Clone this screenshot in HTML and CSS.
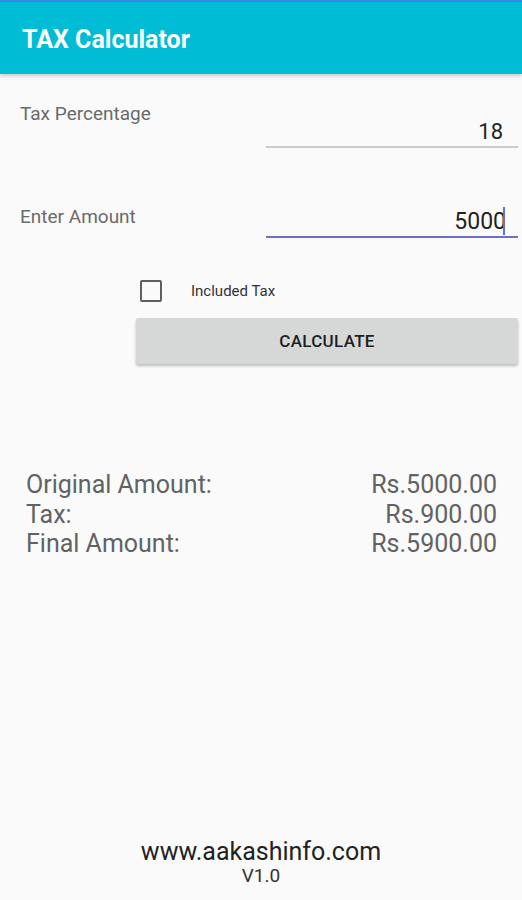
FILE: index.html
```html
<!DOCTYPE html>
<html lang="en">
<head>
  <meta charset="UTF-8">
  <title>TAX Calculator</title>
  <link rel="stylesheet" href="styles.css">
</head>
<body>
  <div class="status"></div>
  <div class="toolbar">TAX Calculator</div>

  <div class="content">
    <div class="row row-first">
      <label class="label" for="percent">Tax Percentage</label>
      <div class="field">
        <input type="text" id="percent" value="18">
      </div>
    </div>

    <div class="row row-second">
      <label class="label" for="amount">Enter Amount</label>
      <div class="field active">
        <span class="value">5000</span><span class="cursor"></span>
      </div>
    </div>

    <div class="check-row">
      <span class="checkbox"></span>
      <span class="check-label">Included Tax</span>
    </div>

    <button class="calc">CALCULATE</button>

    <div class="results">
      <div class="line"><span>Original Amount:</span><span>Rs.5000.00</span></div>
      <div class="line"><span>Tax:</span><span>Rs.900.00</span></div>
      <div class="line"><span>Final Amount:</span><span>Rs.5900.00</span></div>
    </div>
  </div>

  <div class="footer">
    <div class="site">www.aakashinfo.com</div>
    <div class="version">V1.0</div>
  </div>
</body>
</html>
```

FILE: styles.css
```css
body {
  font-family: Roboto, "Noto Sans", sans-serif;
  background-color: #fafafa;
  margin: 0;
  padding: 0;
  min-height: 100vh;
  display: flex;
  flex-direction: column;
}

.status {
  height: 2px;
  background-color: #3f86e6;
}

.toolbar {
  height: 72px;
  background-color: #00bcd4;
  color: #fff;
  font-size: 25px;
  font-weight: bold;
  line-height: 68px;
  padding: 4px 0 0 22px;
  box-shadow: 0 2px 4px rgba(0,0,0,0.2);
  box-sizing: border-box;
}

.content {
  padding: 29px 4px 0 20px;
}

.row {
  display: flex;
  justify-content: space-between;
  align-items: flex-start;
}

.label {
  font-size: 19px;
  line-height: 22px;
  color: #6a6a6a;
}

.field {
  width: 252px;
  height: 31px;
  border-bottom: 2px solid #cbcbcb;
  box-sizing: border-box;
  padding-right: 15px;
  display: flex;
  justify-content: flex-end;
  align-items: center;
}

.row-first .field {
  margin-top: 14px;
}

.row-second {
  margin-top: 58px;
}

.field.active {
  height: 32px;
  border-bottom-color: #6b71c6;
}

.field input {
  border: none;
  background: transparent;
  font-family: inherit;
  font-size: 22px;
  color: #222;
  text-align: right;
  width: 100%;
  padding: 0;
  outline: none;
}

.value {
  font-size: 23px;
  color: #222;
}

.cursor {
  width: 2px;
  height: 28px;
  background-color: #6b71c6;
  margin-left: -3px;
  margin-right: -2px;
}

.check-row {
  display: flex;
  align-items: center;
  margin-top: 42px;
  margin-left: 120px;
}

.checkbox {
  width: 22px;
  height: 22px;
  border: 2px solid #5f5f5f;
  border-radius: 2px;
  box-sizing: border-box;
}

.check-label {
  font-size: 15px;
  color: #333;
  margin-left: 29px;
}

.calc {
  display: block;
  width: 382px;
  height: 46px;
  margin: 16px 0 0 116px;
  background-color: #d6d7d7;
  border: none;
  border-radius: 2px;
  box-shadow: 0 2px 3px rgba(0,0,0,0.25);
  font-family: inherit;
  font-size: 17px;
  font-weight: 500;
  letter-spacing: 0.3px;
  color: #1e1e1e;
}

.results {
  margin: 106px 21px 0 6px;
}

.line {
  display: flex;
  justify-content: space-between;
  font-size: 25px;
  line-height: 29.5px;
  color: #626262;
}

.footer {
  margin-top: auto;
  text-align: center;
  padding-bottom: 14px;
  color: #222;
}

.site {
  font-size: 25px;
  line-height: 28px;
}

.version {
  font-size: 19px;
  line-height: 20px;
  color: #333;
}
```
